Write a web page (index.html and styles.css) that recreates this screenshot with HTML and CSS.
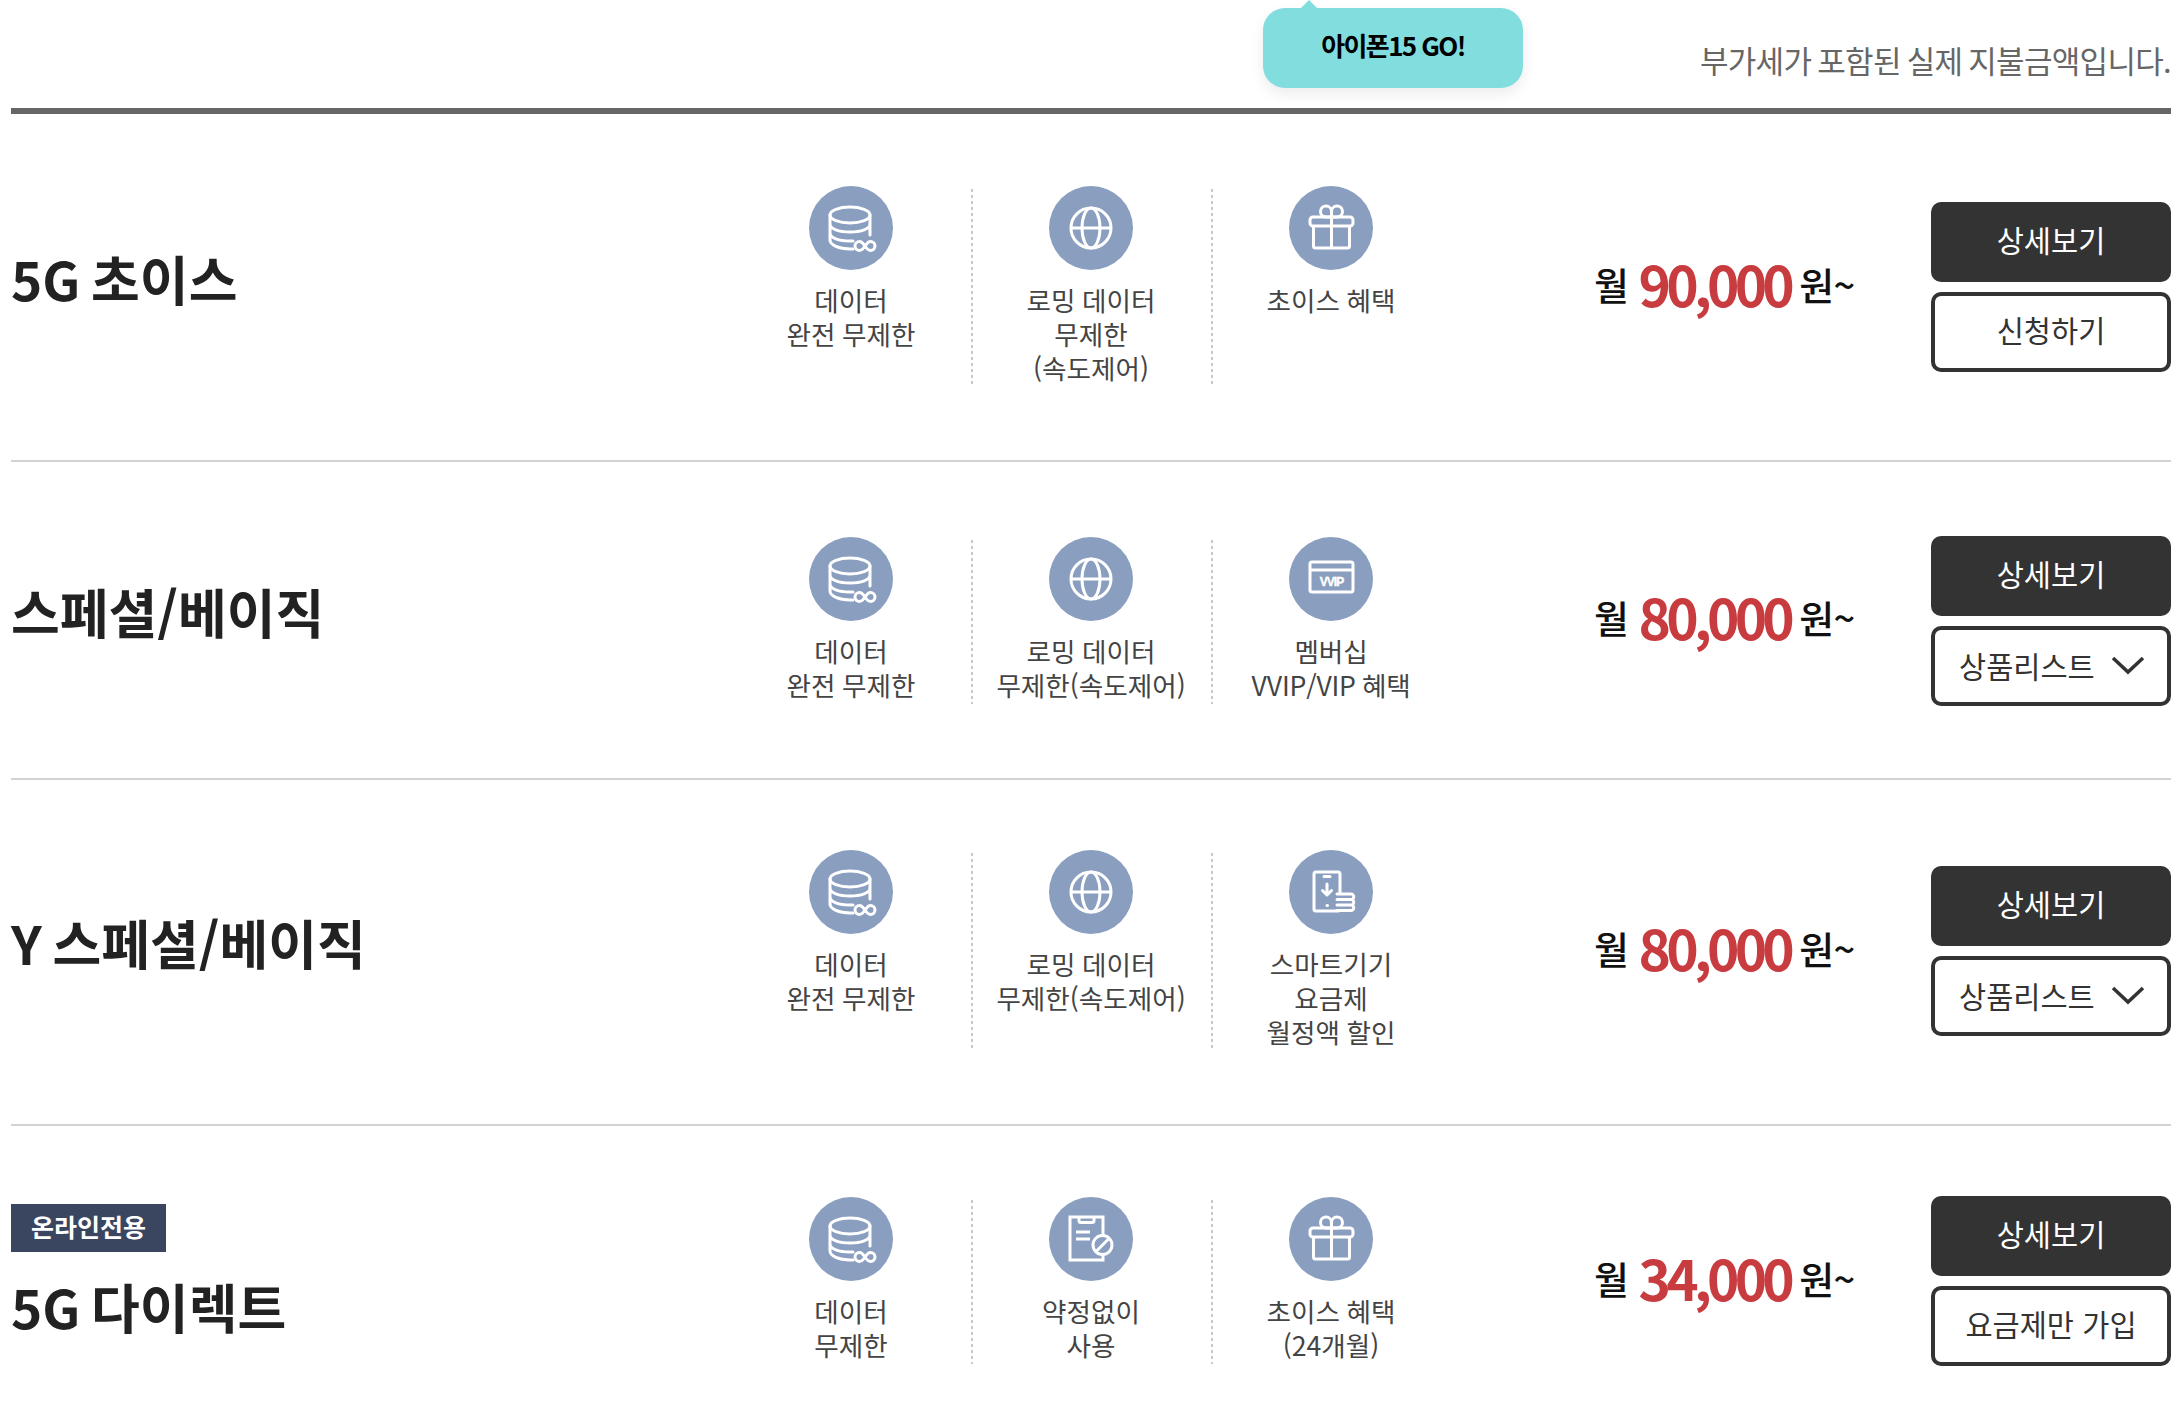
FILE: index.html
```html
<!DOCTYPE html>
<html lang="ko">
<head>
<meta charset="utf-8">
<title>요금제</title>
<link rel="stylesheet" href="styles.css">
</head>
<body>
<svg class="defs" width="0" height="0" aria-hidden="true">
  <symbol id="i-data" viewBox="0 0 84 84">
    <circle cx="42" cy="42" r="42" fill="#8a9ec0"/>
    <g fill="none" stroke="#fff" stroke-width="3" stroke-linecap="round">
      <ellipse cx="41" cy="29" rx="20" ry="8"/>
      <path d="M21 29v25c0 5 9 9 20 9h3M61 29v20M21 38c0 5 9 8 20 8s20-3 20-8M21 47c0 5 9 8 20 8h3"/>
      <path d="M56 60c-2-3-3.500-4.500-5.500-4.500a4.500 4.500 0 0 0 0 9c2 0 3.500-1.500 5.500-4.500c2-3 3.500-4.500 5.500-4.500a4.500 4.500 0 0 1 0 9c-2 0-3.500-1.500-5.500-4.500z"/>
    </g>
  </symbol>
  <symbol id="i-globe" viewBox="0 0 84 84">
    <circle cx="42" cy="42" r="42" fill="#8a9ec0"/>
    <g fill="none" stroke="#fff" stroke-width="3">
      <circle cx="42" cy="42" r="20"/>
      <ellipse cx="42" cy="42" rx="9" ry="20"/>
      <path d="M22 42h40"/>
    </g>
  </symbol>
  <symbol id="i-gift" viewBox="0 0 84 84">
    <circle cx="42" cy="42" r="42" fill="#8a9ec0"/>
    <g fill="none" stroke="#fff" stroke-width="3" stroke-linejoin="round">
      <rect x="21" y="31" width="43" height="9" rx="3"/>
      <path d="M24.500 40v20a2 2 0 0 0 2 2h32a2 2 0 0 0 2-2V40M42.500 31v31"/>
      <path d="M42.500 31h-6a5.500 5.500 0 1 1 6-5.500zM42.500 31h6a5.500 5.500 0 1 0-6-5.500z"/>
    </g>
  </symbol>
  <symbol id="i-phone" viewBox="0 0 84 84">
    <circle cx="42" cy="42" r="42" fill="#8a9ec0"/>
    <g fill="none" stroke="#fff" stroke-width="3" stroke-linecap="round" stroke-linejoin="round">
      <rect x="25" y="22" width="26" height="39" rx="2"/>
      <path d="M35 26.500h6M38 34v11M33.500 40.500l4.500 4.500 4.500-4.500M38 55.500h.5"/>
      <path d="M48 43h16v18H48z" fill="#8a9ec0" stroke="none"/>
      <path d="M48 44h14a2 2 0 0 1 0 5.500H48M62 49.500a2 2 0 0 1 0 5.500H48M62 55a2.500 2.500 0 0 1 0 5.500H48"/>
    </g>
  </symbol>
  <symbol id="i-clip" viewBox="0 0 84 84">
    <circle cx="42" cy="42" r="42" fill="#8a9ec0"/>
    <g fill="none" stroke="#fff" stroke-width="3">
      <path d="M21 20h33v43H21z"/>
      <path d="M30 20v3.500a2 2 0 0 0 2 2h11a2 2 0 0 0 2-2V20M27 35h14M27 42h14"/>
      <circle cx="53.500" cy="48" r="9.500" fill="#8a9ec0"/>
      <path d="M47 54.500l13-13"/>
    </g>
  </symbol>
</svg>

<main class="page">
  <header class="top">
    <div class="bubble">아이폰15 GO!</div>
    <p class="vat">부가세가 포함된 실제 지불금액입니다.</p>
  </header>

  <section class="row r1">
    <div class="name"><h2>5G 초이스</h2></div>
    <ul class="feats">
      <li><svg class="ic"><use href="#i-data"/></svg><p>데이터<br>완전 무제한</p></li>
      <li><svg class="ic"><use href="#i-globe"/></svg><p>로밍 데이터<br>무제한<br>(속도제어)</p></li>
      <li><svg class="ic"><use href="#i-gift"/></svg><p>초이스 혜택</p></li>
    </ul>
    <div class="price">월 <b>90,000</b> 원~</div>
    <div class="btns"><a class="btn dark">상세보기</a><a class="btn line">신청하기</a></div>
  </section>

  <section class="row r2">
    <div class="name"><h2>스페셜/베이직</h2></div>
    <ul class="feats">
      <li><svg class="ic"><use href="#i-data"/></svg><p>데이터<br>완전 무제한</p></li>
      <li><svg class="ic"><use href="#i-globe"/></svg><p>로밍 데이터<br>무제한(속도제어)</p></li>
      <li>
        <svg class="ic" viewBox="0 0 84 84">
          <circle cx="42" cy="42" r="42" fill="#8a9ec0"/>
          <g fill="none" stroke="#fff" stroke-width="3">
            <rect x="21" y="25" width="43" height="30" rx="2"/>
            <path d="M21 33h43"/>
          </g>
          <text class="vip-text" x="42.500" y="48.500" text-anchor="middle">VVIP</text>
        </svg>
        <p class="tight">멤버십<br>VVIP/VIP 혜택</p>
      </li>
    </ul>
    <div class="price">월 <b>80,000</b> 원~</div>
    <div class="btns"><a class="btn dark">상세보기</a><a class="btn line drop">상품리스트<svg class="chev" viewBox="0 0 34 20"><path d="M2 3l15 14L32 3"/></svg></a></div>
  </section>

  <section class="row r3">
    <div class="name"><h2>Y 스페셜/베이직</h2></div>
    <ul class="feats">
      <li><svg class="ic"><use href="#i-data"/></svg><p>데이터<br>완전 무제한</p></li>
      <li><svg class="ic"><use href="#i-globe"/></svg><p>로밍 데이터<br>무제한(속도제어)</p></li>
      <li><svg class="ic"><use href="#i-phone"/></svg><p>스마트기기<br>요금제<br>월정액 할인</p></li>
    </ul>
    <div class="price">월 <b>80,000</b> 원~</div>
    <div class="btns"><a class="btn dark">상세보기</a><a class="btn line drop">상품리스트<svg class="chev" viewBox="0 0 34 20"><path d="M2 3l15 14L32 3"/></svg></a></div>
  </section>

  <section class="row r4">
    <div class="name"><span class="badge">온라인전용</span><h2>5G 다이렉트</h2></div>
    <ul class="feats">
      <li><svg class="ic"><use href="#i-data"/></svg><p>데이터<br>무제한</p></li>
      <li><svg class="ic"><use href="#i-clip"/></svg><p>약정없이<br>사용</p></li>
      <li><svg class="ic"><use href="#i-gift"/></svg><p>초이스 혜택<br>(24개월)</p></li>
    </ul>
    <div class="price">월 <b>34,000</b> 원~</div>
    <div class="btns"><a class="btn dark">상세보기</a><a class="btn line">요금제만 가입</a></div>
  </section>
</main>
</body>
</html>
```
FILE: styles.css
```css
* { box-sizing: border-box; }
body {
  margin: 0;
  font-family: "Noto Sans CJK KR", "Noto Sans", sans-serif;
  color: #333;
  background: #fff;
}
ul { list-style: none; margin: 0; padding: 0; }
p, h2 { margin: 0; }
.defs { position: absolute; }
.vip-text { font: 700 12px "Liberation Sans", sans-serif; letter-spacing: -1px; fill: #fff; stroke: #fff; stroke-width: .4; }

.page { margin: 0 9px 0 11px; }

.top {
  position: relative;
  height: 114px;
  border-bottom: 6px solid #666;
  display: flex;
  justify-content: flex-end;
  padding-top: 38px;
}
.vat { font-size: 31px; line-height: 44px; letter-spacing: -.7px; word-spacing: -2px; color: #666; }
.bubble {
  position: absolute;
  left: 1252px;
  top: 8px;
  width: 260px;
  height: 80px;
  border-radius: 22px;
  background: #82dede;
  box-shadow: 0 6px 14px rgba(0, 0, 0, .08);
  font-size: 26px;
  font-weight: 700;
  letter-spacing: -1.6px;
  line-height: 74px;
  text-align: center;
  color: #000;
}
.bubble::before {
  content: "";
  position: absolute;
  left: 36px;
  top: -8px;
  border-left: 10px solid transparent;
  border-right: 10px solid transparent;
  border-bottom: 10px solid #82dede;
}

.row {
  display: flex;
  align-items: center;
  border-bottom: 2px solid #d2d2d2;
}
.r1 { height: 348px; }
.r2 { height: 318px; }
.r3 { height: 346px; }
.r4 { height: 276px; padding-top: 36px; border-bottom: 0; }

.name { width: 720px; padding-bottom: 18px; }
.r3 .name { padding-bottom: 20px; }
.r4 .name { padding-bottom: 0; margin-top: -22px; }
h2 { font-size: 53px; line-height: 64px; font-weight: 700; word-spacing: -4px; color: #222; }
.badge {
  display: block;
  width: 155px;
  height: 48px;
  margin-bottom: 22px;
  background: #3a4560;
  color: #fff;
  font-size: 25px;
  font-weight: 700;
  line-height: 45px;
  text-align: center;
}

.feats { display: flex; width: 720px; margin-top: 3px; }
.r1 .feats { margin-top: 1px; }
.r3 .feats { margin-top: -1px; }
.r4 .feats { margin-top: 0; }
.feats li {
  width: 240px;
  padding-bottom: 2px;
  text-align: center;
}
.feats li + li {
  background: linear-gradient(#c9c9c9 3px, transparent 3px) left top / 2px 6px repeat-y;
}
.ic { display: block; width: 84px; height: 84px; margin: -3px auto 0; }
.feats p { margin-top: 13px; font-size: 26.6px; line-height: 34px; word-spacing: -1px; color: #444; }
.feats .tight { letter-spacing: -.2px; }

.price {
  flex: 1;
  padding: 0 0 8px 143px;
  font-size: 38px;
  font-weight: 500;
  letter-spacing: -.5px;
  color: #111;
  white-space: nowrap;
}
.r3 .price { margin-top: -2px; }
.r4 .price { margin-top: -3px; }
.price b {
  font-size: 55px;
  font-weight: 700;
  letter-spacing: -4.8px;
  color: #c83c40;
  vertical-align: -7px;
  margin-right: -1px;
}

.btns { width: 240px; display: flex; flex-direction: column; gap: 10px; }
.r2 .btns { margin-top: 2px; }
.r3 .btns, .r4 .btns { margin-top: -3px; }
.btn {
  display: flex;
  align-items: center;
  justify-content: center;
  height: 80px;
  padding-bottom: 6px;
  border-radius: 10px;
  font-size: 29.5px;
  color: #333;
}
.dark { background: #333; color: #fff; }
.line { border: 4px solid #333; background: #fff; }
.drop { justify-content: space-between; padding: 0 22px 2px 24px; }
.chev { width: 34px; height: 20px; fill: none; stroke: #333; stroke-width: 3.5; }
```
